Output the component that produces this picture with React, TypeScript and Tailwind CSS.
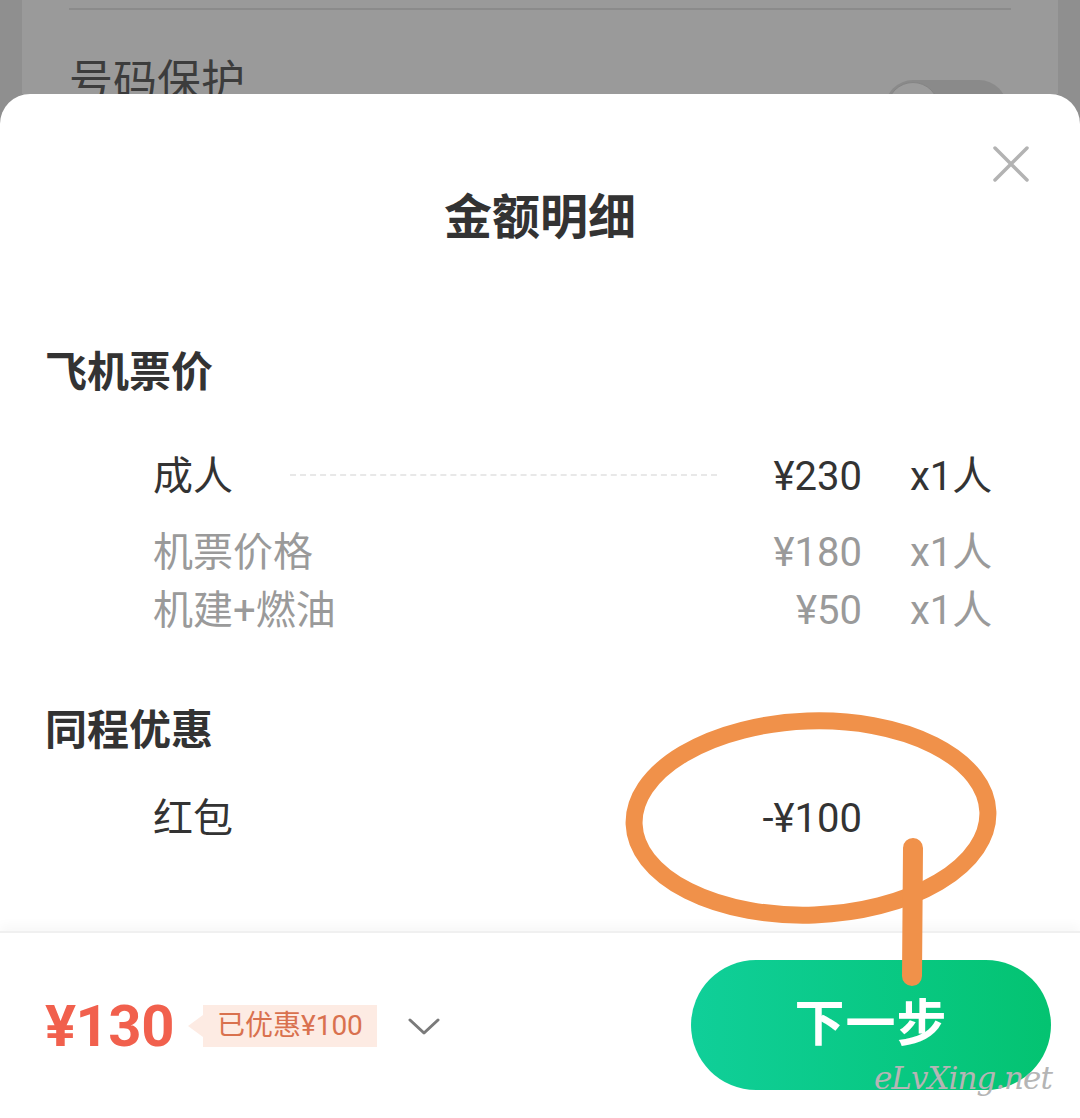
import React from "react";

const font = { fontFamily: 'Roboto, "Noto Sans CJK SC", sans-serif' };

function Row({
  label,
  price,
  qty,
  muted,
  dotted,
  className,
}: {
  label: string;
  price: string;
  qty?: string;
  muted?: boolean;
  dotted?: boolean;
  className?: string;
}) {
  const color = muted ? "text-[#9a9a9a]" : "text-[#333333]";
  return (
    <div className={`flex items-center h-[56px] pl-[153px] pr-[88px] text-[40px] leading-[56px] ${color} ${className ?? ""}`}>
      {dotted ? (
        <>
          <div className="w-[137px] whitespace-nowrap">{label}</div>
          <div className="w-[427px] border-t-2 border-dashed border-[#e8e8e8] mt-[-4px]" />
        </>
      ) : (
        <div className="whitespace-nowrap">{label}</div>
      )}
      <div className="flex-1 text-right whitespace-nowrap">{price}</div>
      <div className="w-[82px] ml-[48px] whitespace-nowrap">{qty ?? ""}</div>
    </div>
  );
}

export default function App() {
  return (
    <div className="relative w-[1080px] h-[1118px] overflow-hidden bg-[#8f8f8f]" style={font}>
      {/* background page */}
      <div className="h-[94px] overflow-hidden px-[22px]">
        <div className="h-[140px] bg-[#9a9a9a] px-[47px] pt-[8px]">
          <div className="h-[2px] bg-[#8b8b8b]" />
          <div className="flex items-start justify-between mt-[44px]">
            <div className="text-[44px] leading-[56px] text-[#3c3c3c]">号码保护</div>
            <div className="relative w-[122px] h-[56px] rounded-full bg-[#8a8a8a] mt-[26px] mr-[4px]">
              <div className="absolute left-[2px] top-[2px] w-[52px] h-[52px] rounded-full bg-[#9c9c9c] border border-[#858585]" />
            </div>
          </div>
        </div>
      </div>

      {/* sheet */}
      <div className="relative h-[1024px] bg-white rounded-t-[30px] flex flex-col">
        <svg className="absolute top-[52px] right-[51px]" width="36" height="36" viewBox="0 0 36 36">
          <path d="M2 2 L34 34 M34 2 L2 34" stroke="#b3b3b3" strokeWidth="3.5" strokeLinecap="round" />
        </svg>

        <div className="flex-1">
          <div className="pt-[94px] h-[154px] text-center text-[48px] leading-[60px] font-bold text-[#333333]">
            金额明细
          </div>

          <div className="mt-[97px] pl-[45px] h-[56px] text-[42px] leading-[56px] font-bold text-[#333333]">飞机票价</div>

          <Row className="mt-[48px]" label="成人" price="¥230" qty="x1人" dotted />
          <Row className="mt-[20px]" label="机票价格" price="¥180" qty="x1人" muted />
          <Row className="mt-[2px]" label="机建+燃油" price="¥50" qty="x1人" muted />

          <div className="mt-[64px] pl-[45px] h-[56px] text-[42px] leading-[56px] font-bold text-[#333333]">同程优惠</div>

          <Row className="mt-[32px]" label="红包" price="-¥100" />
        </div>

        {/* footer */}
        <div className="h-[187px] border-t-2 border-[#f0f0f0] shadow-[0_-6px_10px_rgba(0,0,0,0.03)] flex items-center pl-[45px] pr-[29px]">
          <div className="text-[58px] leading-[64px] font-bold text-[#f1604d] tracking-[-0.5px]">¥130</div>
          <div className="flex items-center ml-[14px]">
            <div className="w-0 h-0 border-y-[11px] border-y-transparent border-r-[15px] border-r-[#fdebe3]" />
            <div className="h-[42px] px-[14px] bg-[#fdebe3] text-[28px] leading-[42px] text-[#d9714e] whitespace-nowrap">
              已优惠¥100
            </div>
          </div>
          <svg className="ml-[31px] mt-[2px]" width="32" height="18" viewBox="0 0 32 18">
            <path d="M2 2 L16 15 L30 2" fill="none" stroke="#7a7a7a" strokeWidth="3" strokeLinecap="round" strokeLinejoin="round" />
          </svg>
          <div className="flex-1" />
          <div className="w-[360px] h-[130px] mb-[2px] rounded-full bg-gradient-to-r from-[#10cf99] to-[#04c371] flex items-center justify-center text-white text-[50px] font-bold tracking-[1px]">
            下一步
          </div>
        </div>
      </div>

      {/* annotation overlay */}
      <svg className="absolute left-0 top-0 pointer-events-none" width="1080" height="1118" viewBox="0 0 1080 1118">
        <ellipse cx="811" cy="818" rx="177" ry="97" fill="none" stroke="#f0914a" strokeWidth="17" transform="rotate(-2 811 818)" />
        <path d="M913 848 L912 976" stroke="#f0914a" strokeWidth="20" strokeLinecap="round" />
      </svg>

      <div
        className="absolute left-[874px] top-[1056px] text-[31px] leading-[44px] italic text-[#b5b5b5] tracking-[-1px] pointer-events-none whitespace-nowrap"
        style={{ fontFamily: '"DejaVu Serif", serif' }}
      >
        eLvXing.net
      </div>
    </div>
  );
}
